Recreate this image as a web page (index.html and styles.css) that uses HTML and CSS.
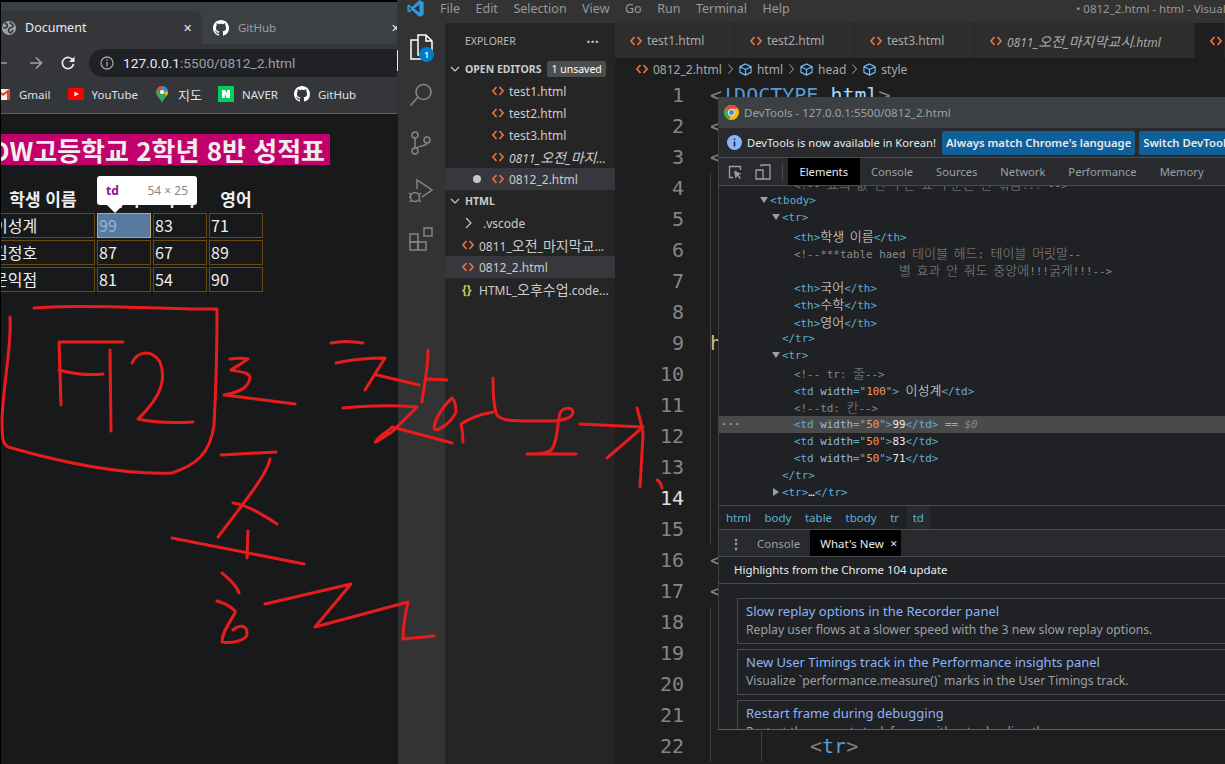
FILE: index.html
```html
<!DOCTYPE html>
<html lang="ko">
<head>
    <meta charset="UTF-8">
    <title>0812_2.html</title>
    <link rel="stylesheet" href="styles.css">
</head>
<body>

<svg class="defs" width="0" height="0">
    <symbol id="html" viewBox="0 0 12 10">
        <path d="M4.5 1 1 5l3.500 4M7.500 1 11 5 7.500 9" fill="none" stroke="#e8703a" stroke-width="1.700"/>
    </symbol>
    <symbol id="cube" viewBox="0 0 14 14">
        <path d="M7 1 13 4v6L7 13 1 10V4zM1 4l6 3 6-3M7 7v6" fill="none" stroke="#75beff" stroke-width="1.200"/>
    </symbol>
    <symbol id="crumb" viewBox="0 0 5 10">
        <path d="M.5 .5 4.500 5 .5 9.500" fill="none" stroke="#a8a8a8" stroke-width="1"/>
    </symbol>
    <symbol id="github" viewBox="0 0 16 16">
        <path fill="#fff" d="M8 0C3.580 0 0 3.580 0 8c0 3.540 2.290 6.530 5.470 7.590.4.070.55-.17.55-.38 0-.19-.01-.82-.01-1.490-2.010.37-2.530-.49-2.690-.94-.09-.23-.48-.94-.82-1.130-.28-.15-.68-.52-.01-.53.63-.01 1.080.58 1.230.82.72 1.210 1.870.87 2.330.66.07-.52.28-.87.51-1.070-1.780-.2-3.640-.89-3.640-3.950 0-.87.31-1.590.82-2.150-.08-.2-.36-1.020.08-2.120 0 0 .67-.21 2.200.82.64-.18 1.320-.27 2-.27.68 0 1.360.09 2 .27 1.530-1.040 2.200-.82 2.200-.82.44 1.100.16 1.920.08 2.120.51.56.82 1.270.82 2.150 0 3.070-1.870 3.750-3.650 3.950.29.25.54.73.54 1.480 0 1.070-.01 1.930-.01 2.200 0 .21.15.46.55.38A8.013 8.013 0 0016 8c0-4.420-3.580-8-8-8z"/>
    </symbol>
</svg>

<div class="desktop">

    <!-- 크롬 창 -->
    <section class="browser">
        <div class="tab-strip">
            <div class="tab tab-active">
                <svg class="tab-icon" width="14" height="14" viewBox="0 0 14 14"><circle cx="7" cy="7" r="7" fill="#9aa0a6"/><path d="M3 2c2 1 3 2 2 4S2 6 1 7m7-6c0 2 2 2 3 3s-2 3-3 3-2 2-1 4 3 0 4-2" fill="none" stroke="#35363a" stroke-width="1.600"/></svg>
                <span class="tab-name">Document</span>
                <span class="tab-close">✕</span>
            </div>
            <div class="tab tab-other">
                <svg class="tab-icon" width="16" height="16"><use href="#github"/></svg>
                <span class="tab-name">GitHub</span>
                <span class="tab-close">✕</span>
            </div>
        </div>
        <div class="toolbar">
            <svg class="nav-back" width="14" height="14" viewBox="0 0 14 14"><path d="M13 7H2M7 1.500 1.500 7 7 12.500" fill="none" stroke="#9aa0a6" stroke-width="1.600"/></svg>
            <svg class="nav-forward" width="14" height="14" viewBox="0 0 14 14"><path d="M1 7h11M7 1.500 12.500 7 7 12.500" fill="none" stroke="#9aa0a6" stroke-width="1.600"/></svg>
            <svg class="nav-reload" width="14" height="14" viewBox="0 0 14 14"><path d="M12 4.500A5.600 5.600 0 1 0 12.500 8" fill="none" stroke="#e8eaed" stroke-width="1.700"/><path d="M13.500 .5v5.500H8z" fill="#e8eaed"/></svg>
            <div class="url-bar">
                <svg width="14" height="14" viewBox="0 0 14 14"><circle cx="7" cy="7" r="6" fill="none" stroke="#9aa0a6" stroke-width="1.300"/><path d="M7 6v4.500M7 3.500v1.500" stroke="#9aa0a6" stroke-width="1.400"/></svg>
                <span class="url"><b>127.0.0.1</b>:5500/0812_2.html</span>
            </div>
        </div>
        <div class="bookmarks">
            <div class="bookmark bm-gmail">
                <svg width="14" height="11" viewBox="0 0 14 11"><rect width="14" height="11" rx="1" fill="#eee"/><path d="M0 1v10h3V4l4 3 4-3v7h3V1l-1-1-6 4.500L1 0z" fill="#ea4335"/></svg>
                <span>Gmail</span>
            </div>
            <div class="bookmark bm-youtube">
                <svg width="16" height="12" viewBox="0 0 16 12"><rect width="16" height="12" rx="3" fill="#f00"/><path d="M6.400 3.400v5.200L10.800 6z" fill="#fff"/></svg>
                <span>YouTube</span>
            </div>
            <div class="bookmark bm-maps">
                <svg width="12" height="17" viewBox="0 0 12 17"><path d="M6 0a6 6 0 0 1 6 6c0 4-4 6-6 11C4 12 0 10 0 6a6 6 0 0 1 6-6z" fill="#34a853"/><path d="M1 2.500A6 6 0 0 1 6 0v4L3 7z" fill="#ea4335"/><path d="M6 0a6 6 0 0 1 6 6H8z" fill="#4285f4"/><path d="M12 6c0 2-1 3-2 4L8 6z" fill="#fbbc04"/><circle cx="6" cy="6" r="2" fill="#fff"/></svg>
                <span class="ko">지도</span>
            </div>
            <div class="bookmark bm-naver">
                <svg width="16" height="16" viewBox="0 0 16 16"><rect width="16" height="16" fill="#03cf5d"/><path d="M4 4h3l2.200 3.500V4H12v8H9L6.800 8.500V12H4z" fill="#fff"/></svg>
                <span>NAVER</span>
            </div>
            <div class="bookmark bm-github">
                <svg width="16" height="16"><use href="#github"/></svg>
                <span>GitHub</span>
            </div>
        </div>
        <div class="page">
            <h1 class="score-title">DW고등학교 2학년 8반 성적표</h1>
            <table class="score-table">
                <tbody>
                    <tr><th>학생 이름</th><th>국어</th><th>수학</th><th>영어</th></tr>
                    <tr><td class="name-cell">이성계</td><td class="picked">99</td><td>83</td><td>71</td></tr>
                    <tr><td class="name-cell">김정호</td><td>87</td><td>67</td><td>89</td></tr>
                    <tr><td class="name-cell">문익점</td><td>81</td><td>54</td><td>90</td></tr>
                </tbody>
            </table>
            <div class="inspect-tip"><b>td</b><span>54 × 25</span></div>
        </div>
    </section>

    <!-- VS Code 창 -->
    <section class="vscode">
        <header class="titlebar">
            <svg class="vs-logo" width="17" height="17" viewBox="0 0 24 24"><path d="M17.500 0 23.500 3v18l-6 3L7 14l-4 3.500L.5 16V8L3 6.500 7 10z" fill="#2a9be0"/><path d="M17.500 6.500 10 12l7.500 5.500zM3 9v6l3-3z" fill="#333"/></svg>
            <nav class="menu">
                <span>File</span><span>Edit</span><span>Selection</span><span>View</span><span>Go</span><span>Run</span><span>Terminal</span><span>Help</span>
            </nav>
            <div class="win-title">• 0812_2.html - html - Visual Studio Code</div>
        </header>
        <div class="workbench">
            <aside class="activity">
                <div class="act-icon act-files">
                    <svg width="24" height="26" viewBox="0 0 24 26"><path d="M9 1h8l6 6v14H9zM17 1v6h6M9 6H2v19h15v-4" fill="none" stroke="#fff" stroke-width="1.500"/></svg>
                    <span class="act-badge">1</span>
                </div>
                <div class="act-icon act-search">
                    <svg width="24" height="24" viewBox="0 0 24 24"><circle cx="14.500" cy="9" r="7.500" fill="none" stroke="#858585" stroke-width="1.600"/><path d="M9 14 1.500 22.500" stroke="#858585" stroke-width="1.600"/></svg>
                </div>
                <div class="act-icon act-git">
                    <svg width="20" height="24" viewBox="0 0 20 24"><g fill="none" stroke="#858585" stroke-width="1.500"><circle cx="4" cy="4" r="3"/><circle cx="4" cy="20" r="3"/><circle cx="16" cy="9" r="3"/><path d="M4 7v10M16 12c0 4-10 2-11 6"/></g></svg>
                </div>
                <div class="act-icon act-debug">
                    <svg width="26" height="26" viewBox="0 0 26 26"><g fill="none" stroke="#858585" stroke-width="1.500"><path d="M9 11V2l15 10-10 7"/><circle cx="7" cy="19" r="4.500"/><path d="M1 15l2.500 2M1 19h2M1.500 24l2.500-2M13 15l-2.500 2M13 24l-2.500-2"/></g></svg>
                </div>
                <div class="act-icon act-ext">
                    <svg width="25" height="25" viewBox="0 0 25 25"><g fill="none" stroke="#858585" stroke-width="1.500"><rect x="1" y="7" width="8" height="8"/><rect x="1" y="15" width="8" height="8"/><rect x="9" y="15" width="8" height="8"/><rect x="15" y="1" width="8" height="8"/></g></svg>
                </div>
            </aside>

            <aside class="sidebar">
                <div class="side-title"><span>EXPLORER</span><span class="side-dots">···</span></div>
                <div class="side-head">
                    <svg class="chev" width="10" height="10" viewBox="0 0 10 10"><path d="M1 3l4 4 4-4" fill="none" stroke="#ccc" stroke-width="1.100"/></svg>
                    <b>OPEN EDITORS</b><span class="unsaved">1 unsaved</span>
                </div>
                <div class="file open"><svg width="12" height="10"><use href="#html"/></svg><span>test1.html</span></div>
                <div class="file open"><svg width="12" height="10"><use href="#html"/></svg><span>test2.html</span></div>
                <div class="file open"><svg width="12" height="10"><use href="#html"/></svg><span>test3.html</span></div>
                <div class="file open"><svg width="12" height="10"><use href="#html"/></svg><span class="preview">0811_<span class="ko">오전</span>_<span class="ko">마지</span>...</span></div>
                <div class="file open selected"><i class="dirty"></i><svg width="12" height="10"><use href="#html"/></svg><span>0812_2.html</span></div>
                <div class="side-head">
                    <svg class="chev" width="10" height="10" viewBox="0 0 10 10"><path d="M1 3l4 4 4-4" fill="none" stroke="#ccc" stroke-width="1.100"/></svg>
                    <b>HTML</b>
                </div>
                <div class="file folder"><svg width="10" height="12" viewBox="0 0 10 12"><path d="M2 1l5 5-5 5" fill="none" stroke="#ccc" stroke-width="1.100"/></svg><span>.vscode</span></div>
                <div class="file"><svg width="12" height="10"><use href="#html"/></svg><span>0811_<span class="ko">오전</span>_<span class="ko">마지막교</span>...</span></div>
                <div class="file selected"><svg width="12" height="10"><use href="#html"/></svg><span>0812_2.html</span></div>
                <div class="file"><span class="json">{}</span><span>HTML_<span class="ko">오후수업</span>.code...</span></div>
            </aside>

            <main class="editor">
                <div class="tabs">
                    <div class="ed-tab"><svg width="12" height="10"><use href="#html"/></svg>test1.html</div>
                    <div class="ed-tab"><svg width="12" height="10"><use href="#html"/></svg>test2.html</div>
                    <div class="ed-tab"><svg width="12" height="10"><use href="#html"/></svg>test3.html</div>
                    <div class="ed-tab ed-tab-wide"><svg width="12" height="10"><use href="#html"/></svg><em>0811_<span class="ko">오전</span>_<span class="ko">마지막교시</span>.html</em></div>
                    <div class="ed-tab ed-tab-now"><svg width="12" height="10"><use href="#html"/></svg></div>
                </div>
                <div class="crumbs">
                    <svg width="12" height="10"><use href="#html"/></svg><span>0812_2.html</span><svg class="crumb-sep" width="5" height="10"><use href="#crumb"/></svg>
                    <svg width="13" height="13"><use href="#cube"/></svg><span>html</span><svg class="crumb-sep" width="5" height="10"><use href="#crumb"/></svg>
                    <svg width="13" height="13"><use href="#cube"/></svg><span>head</span><svg class="crumb-sep" width="5" height="10"><use href="#crumb"/></svg>
                    <svg width="13" height="13"><use href="#cube"/></svg><span>style</span>
                </div>
                <div class="code">
                    <div class="line"><span class="num">1</span><code><s>&lt;</s><u>!DOCTYPE</u> <b>html</b><s>&gt;</s></code></div>
                    <div class="line"><span class="num">2</span><code><s>&lt;</s></code></div>
                    <div class="line"><span class="num">3</span><code><s>&lt;</s></code></div>
                    <div class="line"><span class="num">4</span><code class="guide"></code></div>
                    <div class="line"><span class="num">5</span><code class="guide"></code></div>
                    <div class="line"><span class="num">6</span><code class="guide"></code></div>
                    <div class="line"><span class="num">7</span><code class="guide"></code></div>
                    <div class="line"><span class="num">8</span><code class="guide"></code></div>
                    <div class="line"><span class="num">9</span><code class="guide"><em>h</em></code></div>
                    <div class="line"><span class="num">10</span><code class="guide"></code></div>
                    <div class="line"><span class="num">11</span><code class="guide"></code></div>
                    <div class="line"><span class="num">12</span><code class="guide"></code></div>
                    <div class="line"><span class="num">13</span><code class="guide"></code></div>
                    <div class="line"><span class="num num-now">14</span><code class="guide"></code></div>
                    <div class="line"><span class="num">15</span><code class="guide"></code></div>
                    <div class="line"><span class="num">16</span><code><s>&lt;</s></code></div>
                    <div class="line"><span class="num">17</span><code><s>&lt;</s></code></div>
                    <div class="line"><span class="num">18</span><code class="guide"></code></div>
                    <div class="line"><span class="num">19</span><code class="guide"></code></div>
                    <div class="line"><span class="num">20</span><code class="guide"></code></div>
                    <div class="line"><span class="num">21</span><code class="guide"></code></div>
                    <div class="line"><span class="num">22</span><code class="guide"><span class="guide-in"><s>&lt;</s><b class="tag">tr</b><s>&gt;</s></span></code></div>
                </div>
            </main>
        </div>
    </section>
</div>

<div class="edge-glint"></div>

<!-- 떠 있는 DevTools 창 -->
<section class="devtools">
    <div class="dt-title">
        <svg width="15" height="15" viewBox="0 0 16 16"><circle cx="8" cy="8" r="8" fill="#fbbc04"/><path d="M8 0a8 8 0 0 1 7 4H8a4 4 0 0 0-3.500 2L1.900 2.900A8 8 0 0 1 8 0z" fill="#ea4335"/><path d="M1.900 2.900 4.500 6a4 4 0 0 0 2.500 5.900L5 15.400A8 8 0 0 1 1.900 2.900z" fill="#34a853"/><circle cx="8" cy="8" r="3.300" fill="#4285f4" stroke="#fff"/></svg>
        <span>DevTools - 127.0.0.1:5500/0812_2.html</span>
    </div>
    <div class="dt-info">
        <svg width="15" height="15" viewBox="0 0 15 15"><circle cx="7.500" cy="7.500" r="7.500" fill="#8ab4f8"/><path d="M7.500 6.500V11.500M7.500 3.500V5" stroke="#202124" stroke-width="1.600"/></svg>
        <span class="dt-info-text">DevTools is now available in Korean!</span>
        <button class="dt-btn">Always match Chrome's language</button>
        <button class="dt-btn dt-btn-cut">Switch DevTools to Korean</button>
    </div>
    <div class="dt-tabs">
        <svg class="dt-tool" width="14" height="14" viewBox="0 0 14 14"><path d="M5 12.500H1.500V1.500h11V5" fill="none" stroke="#9aa0a6" stroke-width="1.300"/><path d="M6 5.500 13.500 9l-3 1 2.500 3-1 1-2.500-3-2 2.500z" fill="#9aa0a6"/></svg>
        <svg class="dt-tool" width="16" height="16" viewBox="0 0 16 16"><path d="M6 2.500V1h9v14H1V6h7v9" fill="none" stroke="#9aa0a6" stroke-width="1.300"/></svg>
        <i class="dt-sep"></i>
        <span class="dt-tab dt-tab-on">Elements</span>
        <span class="dt-tab">Console</span>
        <span class="dt-tab">Sources</span>
        <span class="dt-tab">Network</span>
        <span class="dt-tab">Performance</span>
        <span class="dt-tab">Memory</span>
    </div>
    <div class="dom">
        <div class="dom-rows">
            <div class="row d3 cm">&lt;!-- <span class="ko">표의 값 안 수는 표 구분은 한 묶음</span>!!! --&gt;</div>
            <div class="row d1"><i class="tri"></i><a>&lt;tbody&gt;</a></div>
            <div class="row d2"><i class="tri"></i><a>&lt;tr&gt;</a></div>
            <div class="row d3"><a>&lt;th&gt;</a><span class="ko">학생 이름</span><a>&lt;/th&gt;</a></div>
            <div class="row d3 cm">&lt;!--***table haed <span class="ko">테이블 헤드</span>: <span class="ko">테이블 머릿말</span>--</div>
            <div class="row d-wrap cm"><span class="ko">별 효과 안 줘도 중앙에</span>!!!<span class="ko">굵게</span>!!!--&gt;</div>
            <div class="row d3"><a>&lt;th&gt;</a><span class="ko">국어</span><a>&lt;/th&gt;</a></div>
            <div class="row d3"><a>&lt;th&gt;</a><span class="ko">수학</span><a>&lt;/th&gt;</a></div>
            <div class="row d3"><a>&lt;th&gt;</a><span class="ko">영어</span><a>&lt;/th&gt;</a></div>
            <div class="row d2"><a>&lt;/tr&gt;</a></div>
            <div class="row d2"><i class="tri"></i><a>&lt;tr&gt;</a></div>
            <div class="row d3 cm">&lt;!-- tr: <span class="ko">줄</span>--&gt;</div>
            <div class="row d3"><a>&lt;td <q>width</q>="</a><em>100</em><a>"&gt;</a> <span class="ko">이성계</span><a>&lt;/td&gt;</a></div>
            <div class="row d3 cm">&lt;!--td: <span class="ko">칸</span>--&gt;</div>
            <div class="row d3 row-on"><span class="row-dots">···</span><a>&lt;td <q>width</q>="</a><em>50</em><a>"&gt;</a>99<a>&lt;/td&gt;</a><span class="eq"> == <var>$0</var></span></div>
            <div class="row d3"><a>&lt;td <q>width</q>="</a><em>50</em><a>"&gt;</a>83<a>&lt;/td&gt;</a></div>
            <div class="row d3"><a>&lt;td <q>width</q>="</a><em>50</em><a>"&gt;</a>71<a>&lt;/td&gt;</a></div>
            <div class="row d2"><a>&lt;/tr&gt;</a></div>
            <div class="row d2"><i class="tri tri-closed"></i><a>&lt;tr&gt;</a>…<a>&lt;/tr&gt;</a></div>
        </div>
    </div>
    <div class="dt-path">
        <span>html</span><span>body</span><span>table</span><span>tbody</span><span>tr</span><span class="path-on">td</span>
    </div>
    <div class="drawer-tabs">
        <span class="drawer-dots">⋮</span>
        <span class="drawer-tab">Console</span>
        <span class="drawer-tab drawer-tab-on">What's New<i>✕</i></span>
    </div>
    <div class="news-head">Highlights from the Chrome 104 update</div>
    <div class="news">
        <article class="news-card">
            <h3>Slow replay options in the Recorder panel</h3>
            <p>Replay user flows at a slower speed with the 3 new slow replay options.</p>
        </article>
        <article class="news-card">
            <h3>New User Timings track in the Performance insights panel</h3>
            <p>Visualize `performance.measure()` marks in the User Timings track.</p>
        </article>
        <article class="news-card">
            <h3>Restart frame during debugging</h3>
            <p>Restart the current stack frame without reloading the page.</p>
        </article>
    </div>
</section>

<!-- 빨간 펜 낙서 -->
<svg class="scribble" width="1225" height="764" viewBox="0 0 1225 764">
    <!-- 상자 + F12 -->
    <path d="M10 317C12 345 3 385 2 420C2 440 3 444 8 447C60 462 120 475 172 473C195 465 210 455 214 425C216 390 217 340 217 309C170 310 80 303 34 308"/>
    <path d="M123 342H59L61 405M59 370C70 373 85 376 103 374M110 350L111 431"/>
    <path d="M132 363C138 350 152 350 160 362C166 378 163 395 138 419C155 423 175 423 193 422"/>
    <!-- 로 -->
    <path d="M230 359C238 358 243 358 248 359C240 365 233 368 231 370C240 372 250 372 250 378C248 388 240 392 224 395L295 404"/>
    <!-- 찾아오기 -->
    <path d="M331 343C340 341 352 341 363 343M336 363C350 360 368 358 385 358L365 390M377 375L419 385M428 350C428 370 424 385 422 402M427 379L447 380"/>
    <path d="M343 408C365 406 395 405 417 407L392 432C382 438 372 445 376 441C380 435 388 432 392 427L452 443"/>
    <path d="M452 398C444 405 435 418 434 428C436 434 452 422 456 412C456 405 454 400 452 398M463 442C463 435 462 428 461 424C470 418 482 414 493 412"/>
    <path d="M493 378C493 395 494 408 497 415C503 422 512 421 553 421C562 421 573 418 573 412C572 407 563 407 560 413C557 425 558 440 552 449C549 453 544 454 527 454H576"/>
    <path d="M580 424L642 427M637 408C640 420 643 428 643 435L640 487M643 427L607 458M657 480C660 481 661 484 662 488"/>
    <!-- 조 -->
    <path d="M221 455L276 452M270 459C268 472 250 495 218 537M233 503C245 504 262 514 277 524M248 531L247 558M172 538L304 564"/>
    <!-- 하 지그재그 -->
    <path d="M222 573C230 580 237 586 239 593M217 601C225 603 237 610 235 613C230 622 222 632 222 642C232 644 245 640 247 635C248 625 240 624 233 630"/>
    <path d="M265 604L351 584L315 627L408 602C405 615 403 628 403 639L434 636"/>
</svg>

</body>
</html>
```

FILE: styles.css
```css
* {
    box-sizing: border-box;
}
html, body {
    height: 764px;
    margin: 0;
    overflow: hidden;
}
body {
    position: relative;
    background: #000;
    font-family: "Noto Sans", "Noto Sans CJK KR", sans-serif;
    font-size: 12px;
    color: #ccc;
}
svg {
    flex: none;
}
.defs {
    position: absolute;
}
.desktop {
    display: flex;
    height: 764px;
}

/* 크롬 */
.browser {
    width: 397px;
    flex: none;
    display: flex;
    flex-direction: column;
    margin-left: 1px;
    overflow: hidden;
}
.tab-strip {
    display: flex;
    height: 42px;
    flex: none;
    margin-top: 2px;
    padding-top: 9px;
    background: #3c4043;
}
.tab {
    display: flex;
    align-items: center;
    flex: none;
    height: 33px;
}
.tab-active {
    width: 201px;
    padding-left: 1px;
    background: #35363a;
    border-radius: 0 8px 0 0;
    color: #e8eaed;
    font-size: 12.500px;
}
.tab-other {
    width: 195px;
    padding-left: 11px;
    color: #9aa0a6;
    font-size: 11.500px;
}
.tab-name {
    margin-left: 9px;
}
.tab-close {
    margin-left: auto;
    margin-right: 10px;
    font-size: 11px;
    color: #e8eaed;
}
.tab-other .tab-close {
    margin-right: -3px;
}
.toolbar {
    display: flex;
    align-items: center;
    flex: none;
    height: 38px;
    background: #35363a;
}
.nav-back {
    margin-left: -7px;
}
.nav-forward {
    margin-left: 21px;
}
.nav-reload {
    margin-left: 18px;
}
.url-bar {
    display: flex;
    align-items: center;
    flex: 1;
    height: 28px;
    margin-left: 14px;
    padding-left: 11px;
    background: #202124;
    border-radius: 14px 0 0 14px;
}
.url {
    margin-left: 9px;
    font-family: "Roboto", sans-serif;
    font-size: 13.700px;
    color: #9aa0a6;
    white-space: nowrap;
}
.url b {
    font-weight: 400;
    color: #e8eaed;
}
.bookmarks {
    display: flex;
    align-items: center;
    flex: none;
    height: 32px;
    padding-bottom: 7px;
    background: #35363a;
    border-bottom: 1px solid #5f6368;
    font-size: 11.500px;
    color: #dee1e6;
}
.bookmark {
    display: flex;
    align-items: center;
    flex: none;
    gap: 8px;
}
.bookmark .ko {
    font-size: 13px;
}
.bm-gmail {
    margin-left: -5px;
    gap: 9px;
}
.bm-youtube {
    margin-left: 17px;
}
.bm-maps {
    margin-left: 18px;
    gap: 10px;
}
.bm-naver {
    margin-left: 16px;
}
.bm-github {
    margin-left: 16px;
}

/* 성적표 페이지 */
.page {
    position: relative;
    flex: 1;
    padding-top: 20px;
    background: #18191b;
    color: #eee;
    font-family: "Noto Sans CJK KR", sans-serif;
}
.score-title {
    display: inline-block;
    height: 31px;
    margin: 0 0 19px -10px;
    padding-right: 5px;
    background: #c2006b;
    font-size: 26px;
    line-height: 31px;
    color: #eee;
    white-space: nowrap;
}
.score-table {
    margin-left: -12px;
    border-spacing: 2px;
    font-size: 16px;
}
.score-table th {
    height: 25px;
    padding: 0;
    font-size: 17px;
    font-weight: 700;
    line-height: 25px;
}
.score-table td {
    width: 54px;
    height: 25px;
    padding: 0 1px;
    border: 1px solid #6b4a10;
    line-height: 23px;
}
.score-table .name-cell {
    width: 104px;
}
.score-table .picked {
    background: #56799d;
    border-color: #b7ad6b;
    color: #93b7da;
}
.inspect-tip {
    position: absolute;
    left: 96px;
    top: 62px;
    display: flex;
    justify-content: space-between;
    align-items: center;
    width: 100px;
    height: 29px;
    padding: 0 9px;
    background: #fff;
    border-radius: 3px;
    font-family: "Noto Sans", sans-serif;
    font-size: 12px;
    color: #888;
}
.inspect-tip b {
    color: #881391;
}
.inspect-tip::after {
    content: "";
    position: absolute;
    left: 10px;
    top: 29px;
    border: 8px solid transparent;
    border-top-color: #fff;
    border-bottom: 0;
}

/* VS Code */
.vscode {
    flex: 1;
    min-width: 0;
    display: flex;
    flex-direction: column;
    margin-left: -1px;
}
.titlebar {
    display: flex;
    height: 23px;
    flex: none;
    padding-bottom: 7px;
    align-items: center;
    background: #333;
    font-size: 12.500px;
    color: #999;
    white-space: nowrap;
    overflow: hidden;
}
.vs-logo {
    margin-left: 10px;
}
.menu {
    display: flex;
    gap: 15.500px;
    margin-left: 16px;
}
.win-title {
    margin-left: auto;
    width: 149px;
    flex: none;
    font-size: 11.500px;
}
.workbench {
    display: flex;
    flex: 1;
    min-height: 0;
}
.activity {
    width: 48px;
    flex: none;
    display: flex;
    flex-direction: column;
    align-items: center;
    background: #333;
}
.act-icon {
    position: relative;
    display: flex;
    justify-content: center;
    align-items: center;
    height: 48px;
    width: 48px;
}
.act-badge {
    position: absolute;
    left: 22px;
    top: 24px;
    width: 15px;
    height: 15px;
    border-radius: 50%;
    background: #007acc;
    font-size: 9px;
    font-weight: 600;
    line-height: 15px;
    text-align: center;
    color: #fff;
}
.sidebar {
    width: 170px;
    flex: none;
    background: #252526;
    font-size: 12px;
    white-space: nowrap;
    overflow: hidden;
}
.sidebar .ko, .tabs .ko {
    font-size: 14px;
}
.side-title {
    display: flex;
    justify-content: space-between;
    align-items: center;
    height: 35px;
    padding: 0 16px 0 20px;
    font-size: 10.500px;
    color: #bbb;
}
.side-dots {
    font-size: 15px;
    font-weight: 700;
}
.side-head {
    display: flex;
    align-items: center;
    height: 22px;
    padding-left: 5px;
    font-size: 10.500px;
    color: #ccc;
}
.side-head b {
    margin-left: 5px;
}
.unsaved {
    margin-left: 6px;
    padding: 1px 4px;
    border-radius: 2px;
    background: #4d4d4d;
    font-size: 10.500px;
    color: #fff;
}
.file {
    display: flex;
    align-items: center;
    gap: 5px;
    height: 22px;
    padding-left: 17px;
    color: #ccc;
}
.file.open {
    padding-left: 47px;
}
.file.selected {
    background: #37373d;
}
.file.open.selected {
    padding-left: 28px;
}
.dirty {
    width: 8px;
    height: 8px;
    margin-right: 6px;
    border-radius: 50%;
    background: #c5c5c5;
}
.folder {
    padding-left: 19px;
    gap: 9px;
}
.preview {
    font-style: italic;
}
.json {
    width: 12px;
    font-weight: 700;
    color: #cbcb41;
}
.editor {
    flex: 1;
    min-width: 0;
    background: #1e1e1e;
    overflow: hidden;
}
.tabs {
    display: flex;
    height: 35px;
    background: #252526;
    font-size: 12px;
    color: #a8a8a8;
    white-space: nowrap;
}
.ed-tab {
    display: flex;
    align-items: center;
    gap: 5px;
    flex: none;
    width: 120px;
    padding-left: 15px;
    background: #2d2d2d;
    border-right: 1px solid #252526;
}
.ed-tab-wide {
    width: 220px;
}
.ed-tab-now {
    flex: 1;
    background: #1e1e1e;
}
.crumbs {
    display: flex;
    align-items: center;
    gap: 5px;
    height: 22px;
    padding-left: 21px;
    font-size: 12px;
    color: #a8a8a8;
}
.crumb-sep {
    margin: 0 1px;
}
.code {
    font-family: "DejaVu Sans Mono", monospace;
    font-size: 20px;
    color: #d4d4d4;
}
.line {
    display: flex;
    height: 31px;
    line-height: 31px;
}
.num {
    width: 69px;
    flex: none;
    text-align: right;
    color: #858585;
}
.num-now {
    color: #e0e0e0;
}
.line code {
    flex: 1;
    margin-left: 26px;
    font-family: inherit;
    white-space: pre;
}
.line .guide {
    box-shadow: inset 1px 0 #404040;
}
.line s {
    text-decoration: none;
    color: #808080;
}
.line b {
    font-weight: 400;
    color: #9cdcfe;
}
.line u {
    text-decoration: none;
    color: #569cd6;
}
.line em {
    font-style: normal;
    color: #d7ba7d;
}
.line b.tag {
    color: #569cd6;
}
.guide-in {
    display: block;
    margin-left: 51px;
    padding-left: 49px;
    box-shadow: inset 1px 0 #404040;
}
.edge-glint {
    position: absolute;
    left: 397px;
    top: 50px;
    width: 1px;
    height: 21px;
    background: #e8eaed;
}

/* DevTools */
.devtools {
    position: absolute;
    left: 718px;
    top: 97px;
    width: 507px;
    height: 633px;
    display: flex;
    flex-direction: column;
    background: #202124;
    border-left: 1px solid #3c4043;
    border-bottom: 1px solid #5f6368;
    overflow: hidden;
    color: #9aa0a6;
}
.dt-title {
    display: flex;
    align-items: center;
    gap: 5px;
    height: 31px;
    flex: none;
    padding-left: 5px;
    background: #3c4043;
    font-size: 11.500px;
}
.dt-info {
    display: flex;
    align-items: center;
    flex: none;
    height: 30px;
    padding-left: 8px;
    background: #292a2d;
    border-bottom: 1px solid #494c50;
    color: #e8eaed;
    white-space: nowrap;
}
.dt-info-text {
    margin-left: 5px;
    font-size: 11.200px;
}
.dt-btn {
    flex: none;
    height: 24px;
    margin-left: 6px;
    padding: 0 4px;
    border: 0;
    border-radius: 3px;
    background: #0f5f99;
    font-family: inherit;
    font-size: 11.300px;
    font-weight: 600;
    color: #e8eaed;
}
.dt-btn-cut {
    margin-left: 4px;
}
.dt-tabs {
    display: flex;
    align-items: center;
    flex: none;
    height: 28px;
    background: #292a2d;
    border-bottom: 1px solid #494c50;
    font-size: 11.200px;
}
.dt-tool {
    margin-left: 9px;
}
.dt-tool + .dt-tool {
    margin-left: 13px;
}
.dt-sep {
    width: 1px;
    height: 16px;
    margin: 0 5px 0 11px;
    background: #494c50;
}
.dt-tab {
    padding: 0 11.500px;
    line-height: 27px;
    white-space: nowrap;
}
.dt-tab-on {
    background: #000;
    color: #e8eaed;
}
.dom {
    flex: none;
    height: 319px;
    overflow: hidden;
    font-family: "DejaVu Sans Mono", "Noto Sans CJK KR", monospace;
    font-size: 10.900px;
    color: #e8eaed;
}
.dom .ko {
    font-family: "Noto Sans CJK KR", sans-serif;
    font-size: 13px;
    font-weight: 300;
    word-spacing: 2px;
}
.dom-rows {
    margin-top: -11px;
}
.row {
    position: relative;
    height: 17.200px;
    line-height: 17.200px;
    white-space: pre;
}
.d1 {
    padding-left: 51px;
}
.d2 {
    padding-left: 63px;
}
.d3 {
    padding-left: 75px;
}
.d-wrap {
    padding-left: 180px;
}
.cm {
    color: #898989;
}
.row a {
    color: #5db0d7;
}
.row q {
    quotes: none;
    color: #9bbbdc;
}
.row em {
    font-style: normal;
    color: #f29766;
}
.tri {
    position: absolute;
    margin: 5px 0 0 -10px;
    border: 4px solid transparent;
    border-top: 6px solid #9aa0a6;
    border-bottom: 0;
}
.tri-closed {
    margin: 4px 0 0 -9px;
    border: 4px solid transparent;
    border-left: 6px solid #9aa0a6;
    border-right: 0;
}
.row-on {
    background: #4a4a4a;
}
.row-dots {
    position: absolute;
    left: 2px;
    font-weight: 700;
    color: #9aa0a6;
}
.eq {
    color: #aaa;
}
.eq var {
    color: #888;
}
.dt-path {
    display: flex;
    flex: none;
    gap: 13.500px;
    height: 25px;
    padding-left: 7px;
    background: #202124;
    border-top: 1px solid #494c50;
    border-bottom: 1px solid #494c50;
    font-size: 11.500px;
    line-height: 23px;
    color: #5db0d7;
}
.path-on {
    margin-left: -6px;
    padding: 0 6px;
    background: #292a2d;
}
.drawer-tabs {
    display: flex;
    align-items: center;
    flex: none;
    height: 27px;
    background: #292a2d;
    border-bottom: 1px solid #494c50;
    font-size: 11.500px;
}
.drawer-dots {
    width: 16px;
    margin-left: 9px;
    font-size: 14px;
    font-weight: 700;
    text-align: center;
}
.drawer-tab {
    margin-left: 13px;
}
.drawer-tab-on {
    display: flex;
    align-items: center;
    height: 26px;
    margin-left: 10px;
    padding: 0 3px 0 10px;
    background: #000;
    color: #e8eaed;
}
.drawer-tab-on i {
    margin-left: 6px;
    font-style: normal;
    font-size: 9px;
}
.news-head {
    flex: none;
    height: 27px;
    padding-left: 15px;
    border-bottom: 1px solid #494c50;
    font-size: 11.400px;
    line-height: 26px;
    color: #e8eaed;
}
.news {
    flex: 1;
    min-height: 0;
    overflow: hidden;
    padding: 14px 0 0 18px;
}
.news-card {
    width: 520px;
    height: 46px;
    margin-bottom: 5px;
    padding: 2px 8px;
    border: 1px solid #494c50;
}
.news-card h3 {
    margin: 0;
    font-size: 13px;
    font-weight: 400;
    line-height: 20px;
    color: #8ab4f8;
}
.news-card p {
    margin: 0;
    font-size: 12.200px;
    line-height: 18px;
    color: #9aa0a6;
}

/* 낙서 */
.scribble {
    position: absolute;
    left: 0;
    top: 0;
    pointer-events: none;
}
.scribble path {
    fill: none;
    stroke: #e81c1c;
    stroke-width: 3;
    stroke-linecap: round;
    stroke-linejoin: round;
}
```
